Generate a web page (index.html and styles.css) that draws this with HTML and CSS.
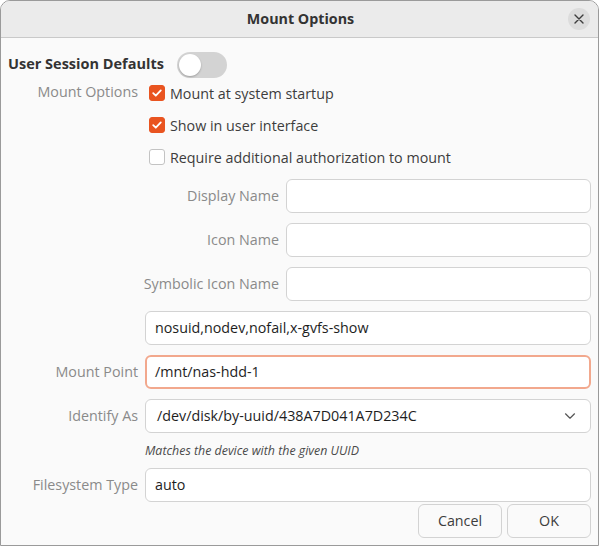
FILE: index.html
```html
<!DOCTYPE html>
<html>
<head>
<meta charset="utf-8">
<link rel="stylesheet" href="styles.css">
</head>
<body>
<div class="window">
  <div class="titlebar">
    <span class="title">Mount Options</span>
    <button class="close" aria-label="Close">
      <svg width="10" height="10" viewBox="0 0 10 10"><path d="M1 1L9 9M9 1L1 9" stroke="#3d3d3d" stroke-width="1.4" stroke-linecap="round"/></svg>
    </button>
  </div>
  <div class="content">
    <div class="header full">
      <span class="header-label">User Session Defaults</span>
      <span class="switch"><span class="knob"></span></span>
    </div>
    <div class="label cb-label">Mount Options</div>
    <div class="checks">
      <label class="check"><span class="box on"><svg width="12" height="12" viewBox="0 0 12 12"><path d="M2.2 6.2L4.8 8.7L9.8 3.4" fill="none" stroke="#fff" stroke-width="1.8" stroke-linecap="round" stroke-linejoin="round"/></svg></span>Mount at system startup</label>
      <label class="check"><span class="box on"><svg width="12" height="12" viewBox="0 0 12 12"><path d="M2.2 6.2L4.8 8.7L9.8 3.4" fill="none" stroke="#fff" stroke-width="1.8" stroke-linecap="round" stroke-linejoin="round"/></svg></span>Show in user interface</label>
      <label class="check"><span class="box"></span>Require additional authorization to mount</label>
    </div>

    <div class="label sub first">Display Name</div>
    <div class="entry sub-entry first"></div>
    <div class="label sub">Icon Name</div>
    <div class="entry sub-entry"></div>
    <div class="label sub">Symbolic Icon Name</div>
    <div class="entry sub-entry"></div>

    <div class="entry wide-entry offset">nosuid,nodev,nofail,x-gvfs-show</div>

    <div class="label">Mount Point</div>
    <div class="entry wide focus">/mnt/nas-hdd-1</div>

    <div class="label">Identify As</div>
    <div class="entry wide combo"><span>/dev/disk/by-uuid/438A7D041A7D234C</span>
      <svg class="chev" width="12" height="8" viewBox="0 0 12 8"><path d="M1.5 1.8L6 6.2L10.5 1.8" fill="none" stroke="#555" stroke-width="1.2" stroke-linecap="round" stroke-linejoin="round"/></svg>
    </div>
    <div class="hint">Matches the device with the given UUID</div>

    <div class="label">Filesystem Type</div>
    <div class="entry wide">auto</div>

    <div class="buttons full">
      <button class="btn">Cancel</button>
      <button class="btn">OK</button>
    </div>
  </div>
</div>
</body>
</html>
```

FILE: styles.css
```css
* { box-sizing: border-box; }
html, body {
  margin: 0;
  padding: 0;
  background: #ffffff;
}
body {
  font-family: "Open Sans", "Noto Sans", sans-serif;
  font-size: 14.3px;
  color: #3d3d3d;
}
.window {
  width: 599px;
  height: 546px;
  border: 1px solid #9a9a9a;
  border-radius: 10px 10px 0 0;
  background: #fafafa;
  overflow: hidden;
}
.titlebar {
  height: 37px;
  background: #ebebeb;
  border-bottom: 1px solid #c9c9c9;
  display: flex;
  align-items: center;
  justify-content: center;
  position: relative;
}
.title {
  font-weight: 700;
  font-size: 14.3px;
  color: #333;
  margin-left: 2px;
  padding-bottom: 1px;
}
.close {
  position: absolute;
  right: 8px;
  top: 7px;
  width: 22px;
  height: 22px;
  border-radius: 50%;
  border: none;
  background: #dcdcdc;
  display: flex;
  align-items: center;
  justify-content: center;
  padding: 0;
}
.content {
  padding: 14px 7px 0 7px;
  display: grid;
  grid-template-columns: 130px 134px 1fr;
  column-gap: 7px;
  align-items: center;
}
.full { grid-column: 1 / 4; }
.header {
  height: 25px;
  display: flex;
  align-items: flex-start;
  gap: 13px;
}
.header-label {
  font-weight: 700;
  font-size: 14.5px;
  line-height: 24px;
  color: #333;
  margin-left: 0;
}
.switch {
  width: 50px;
  height: 26px;
  border-radius: 13px;
  background: #d3d3d3;
  position: relative;
  display: block;
}
.knob {
  position: absolute;
  left: 2px;
  top: 2px;
  width: 22px;
  height: 22px;
  border-radius: 50%;
  background: #fff;
  box-shadow: 0 1px 2px rgba(0,0,0,0.25);
}
.label {
  grid-column: 1;
  text-align: right;
  color: #8a8a8a;
  margin-top: 10px;
  padding-bottom: 2px;
}
.label.cb-label {
  align-self: start;
  margin-top: 5px;
}
.checks {
  grid-column: 2 / 4;
  display: flex;
  flex-direction: column;
}
.check {
  height: 32px;
  display: flex;
  align-items: center;
  color: #3d3d3d;
}
.box {
  width: 16px;
  height: 16px;
  border-radius: 3px;
  margin-left: 4px;
  margin-right: 5px;
  border: 1px solid #c3c3c3;
  background: #fff;
  display: flex;
  align-items: center;
  justify-content: center;
}
.box.on {
  background: #e95420;
  border-color: #e95420;
}
.label.sub {
  grid-column: 1 / 3;
}
.entry {
  height: 34px;
  border: 1px solid #d3d3d3;
  border-radius: 6px;
  background: #ffffff;
  margin-top: 10px;
  padding: 0 9px 2px 9px;
  display: flex;
  align-items: center;
  color: #1e1e1e;
}
.label.sub.first, .entry.first { margin-top: 6px; }
.sub-entry { grid-column: 3; }
.wide-entry, .wide { grid-column: 2 / 4; }
.focus {
  border: 2px solid #f2a88d;
  padding: 0 8px 2px 8px;
}
.combo {
  justify-content: space-between;
  padding-right: 14px;
}
.combo span { padding-left: 2px; }
.chev { margin-top: 2px; }
.hint {
  grid-column: 2 / 4;
  height: 35px;
  display: flex;
  align-items: center;
  font-style: italic;
  font-size: 12.4px;
  color: #4a4a4a;
  padding-bottom: 1px;
}
.hint + .label, .hint + .label + .entry { margin-top: 0; }
.buttons {
  display: flex;
  justify-content: flex-end;
  gap: 5px;
  margin-top: 2px;
}
.btn {
  width: 84px;
  height: 34px;
  border: 1px solid #d3d3d3;
  border-radius: 6px;
  background: #fafafa;
  font-family: inherit;
  font-size: 14.3px;
  color: #3d3d3d;
  padding: 0 0 2px 0;
}
```
